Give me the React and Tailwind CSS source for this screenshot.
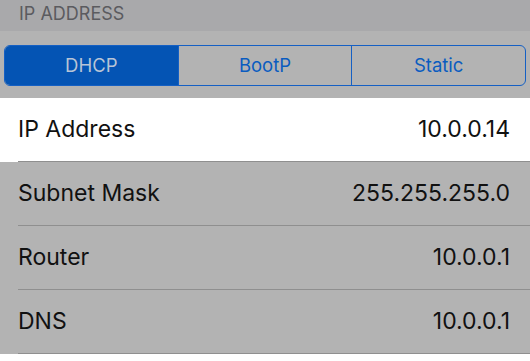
import React from 'react';

const rows = [
  { label: 'IP Address', value: '10.0.0.14', active: true },
  { label: 'Subnet Mask', value: '255.255.255.0' },
  { label: 'Router', value: '10.0.0.1' },
  { label: 'DNS', value: '10.0.0.1' },
];

const segments = ['DHCP', 'BootP', 'Static'];

export default function App() {
  return (
    <div className="h-[361px] w-[530px] overflow-hidden bg-white font-['Inter','Liberation_Sans',sans-serif]">
      {/* section header */}
      <div className="h-[31px] bg-[#a9a9ab] pl-[19px] pt-[2px] text-[18px] leading-[24px] text-[#5b5b5f]">
        IP ADDRESS
      </div>

      {/* segmented control */}
      <div className="bg-[#b3b3b3] px-[4px] pt-[14px] pb-[12px]">
        <div className="flex h-[41px] overflow-hidden rounded-[6px] border-[1.5px] border-[#1560c4]">
          {segments.map((s, i) => (
            <div
              key={s}
              className={`flex flex-1 items-center justify-center text-[18.5px] ${
                i === 0 ? 'bg-[#0454b4] text-[#b8c4d6]' : 'text-[#0a5cc0]'
              } ${i > 0 ? 'border-l-[1.5px] border-[#1560c4]' : ''}`}
            >
              {s}
            </div>
          ))}
        </div>
      </div>

      {/* rows */}
      {rows.map(({ label, value, active }) => (
        <div key={label} className={active ? 'bg-white' : 'bg-[#b3b3b3]'}>
          <div className="ml-[18px] flex h-[64px] items-center justify-between border-b border-[#8f8f8f] pr-[20px] text-[23px] text-[#111]">
            <span>{label}</span>
            <span>{value}</span>
          </div>
        </div>
      ))}
    </div>
  );
}
